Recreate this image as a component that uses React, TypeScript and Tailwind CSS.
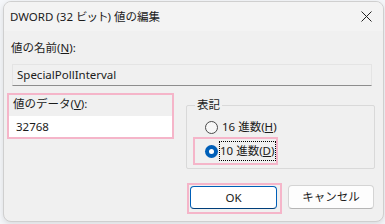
import React from 'react'

const FONT = {
  fontFamily: '"Noto Sans", "Noto Sans CJK JP", sans-serif',
}

function Radio({ checked }: { checked?: boolean }) {
  if (checked) {
    return (
      <span className="flex h-[13px] w-[13px] shrink-0 items-center justify-center rounded-full bg-[#005fb8]">
        <span className="h-[5px] w-[5px] rounded-full bg-white" />
      </span>
    )
  }
  return <span className="h-[13px] w-[13px] shrink-0 rounded-full border border-[#4a4a4a] bg-[#f7f7f7]" />
}

export default function App() {
  return (
    <div
      className="h-[224px] w-[385px] overflow-hidden bg-[#f5f7fa] pl-[3px] pt-[1px] text-[11.5px] leading-[16px] text-[#1b1b1b]"
      style={FONT}
    >
      <div className="h-[221px] w-[381px] overflow-hidden rounded-[8px] border border-[#cfcfcf] bg-[#f0f0f0] shadow-[0_2px_6px_rgba(0,0,0,0.12)]">
        {/* title bar */}
        <div className="flex h-[29px] items-center justify-between bg-[#f3f3f3] pl-[6px] pr-[10px]">
          <span>
            DWORD (32 <span className="tracking-[-1px]">ビット</span>) 値の編集
          </span>
          <svg width="11" height="11" viewBox="0 0 11 11" className="mr-[1px]">
            <path d="M0.5 0.5 L10.5 10.5 M10.5 0.5 L0.5 10.5" stroke="#222" strokeWidth="1" />
          </svg>
        </div>

        <div className="px-[2px]">
          <div className="mt-[9px] pl-[5px]">
            値の名前(<span className="underline">N</span>):
          </div>
          <div className="mr-[9px] ml-[6px] mt-[8px] flex h-[22px] items-center border border-[#e4e4e4] border-b-[#8d8d8d] bg-[#f0f0f0] pl-[4px]">
            SpecialPollInterval
          </div>

          <div className="mt-[7px] flex items-start">
            <div className="ml-[1px] flex h-[46px] w-[167px] flex-col border-2 border-[#f5b5c9]">
              <div className="pl-[4px] pt-[1px]">
                値のデータ(<span className="underline">V</span>):
              </div>
              <div className="mt-[4px] flex h-[21px] items-center bg-white pl-[7px]">32768</div>
            </div>

            <div className="relative ml-[12px] mt-[12px] h-[64px] w-[189px] rounded-[2px] border border-[#d9d9d9]">
              <span className="absolute -top-[9px] left-[8px] bg-[#f0f0f0] px-[2px]">表記</span>
              <div className="flex flex-col pl-[6px] pt-[13px]">
                <div className="flex h-[16px] items-center gap-[4px] whitespace-nowrap pl-[12px]">
                  <Radio />
                  <span>
                    16 進数(<span className="underline">H</span>)
                  </span>
                </div>
                <div className="mt-[2px] flex h-[28px] w-[85px] items-center gap-[1px] whitespace-nowrap border-2 border-[#f5b5c9] pl-[10px]">
                  <Radio checked />
                  <span className="border border-dotted border-black pr-[1px] leading-[18px]">
                    10 進数(<span className="underline">D</span>)
                  </span>
                </div>
              </div>
            </div>
          </div>

          <div className="mt-[14px] flex items-start justify-end gap-[6px] pr-[7px]">
            <div className="h-[31px] w-[95px] border-2 border-[#f5b5c9] pl-[1px] pt-[1px]">
              <div className="flex h-[23px] w-[87px] items-center justify-center rounded-[4px] border border-[#005fb8] border-b-[#003e7a] bg-white">
                OK
              </div>
            </div>
            <div className="mt-[2px] flex h-[24px] w-[86px] items-center justify-center rounded-[4px] border border-[#d4d4d4] border-b-[#b5b5b5] bg-[#fdfdfd]">
              キャンセル
            </div>
          </div>
        </div>
      </div>
    </div>
  )
}
